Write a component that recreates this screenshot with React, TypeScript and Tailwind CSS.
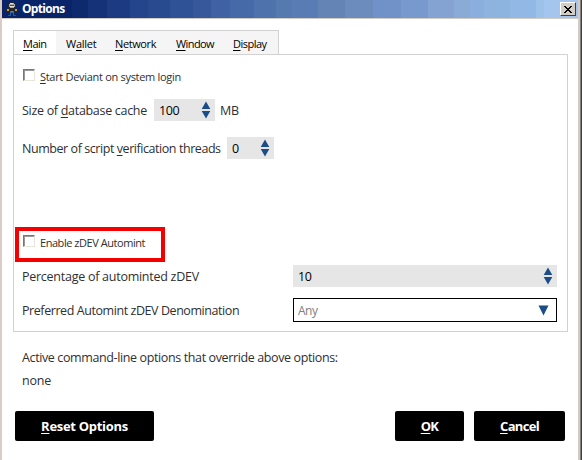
import type { ReactNode } from "react";

const titleBands = [
  { color: "#0a246a", width: 70 },
  { color: "#0e2a6e", width: 16 },
  { color: "#153278", width: 19 },
  { color: "#1c3a82", width: 23 },
  { color: "#24448c", width: 18 },
  { color: "#284a8e", width: 22 },
  { color: "#2f5296", width: 23 },
  { color: "#37599c", width: 18 },
  { color: "#3f62a4", width: 19 },
  { color: "#466aa8", width: 24 },
  { color: "#4e72ac", width: 22 },
  { color: "#557ab0", width: 16 },
  { color: "#5a7cb4", width: 26 },
  { color: "#6584b6", width: 27 },
  { color: "#6b8cbc", width: 28 },
  { color: "#7092c8", width: 28 },
  { color: "#7799ce", width: 27 },
  { color: "#84a3d3", width: 26 },
  { color: "#8aabd6", width: 16 },
  { color: "#8aaede", width: 14 },
  { color: "#8db3df", width: 26 },
  { color: "#92b8e6", width: 26 },
  { color: "#9cc2ea", width: 8 },
  { color: "#a4c6ee", width: 34 },
];

function U({ children }: { children: ReactNode }) {
  return <span className="underline decoration-1 underline-offset-2">{children}</span>;
}

function Robot() {
  return (
    <svg width="12" height="14" viewBox="0 0 12 14" shapeRendering="crispEdges">
      <path fill="#25252b" d="M4 0h4v1h2v6h2v3h-2v1H8v1H4v-1H2v-1H0V7h2V1h2z" />
      <path fill="#aaa9a8" d="M4 1h4v1h1v3H8v1H4V5H3V2h1z" />
      <path fill="#e4e1dc" d="M4 1h3v1H4zM4 4h4v1H4z" />
      <path fill="#514b49" d="M4 3h4v1H4z" />
      <path fill="#d69a27" d="M1 7h2v2H1zM9 7h2v2H9z" />
      <path fill="#2665a8" d="M4 9h4v4H7v-2H5v2H4z" />
      <path fill="#873927" d="M2 13h3v1H2zM7 13h3v1H7z" />
      <path fill="#4994cc" d="M5 9h2v1H5z" />
    </svg>
  );
}

function Checkbox() {
  return (
    <span className="h-3 w-3 shrink-0 border border-t-[#777] border-l-[#777] border-r-[#e8e5dc] border-b-[#e8e5dc] bg-white">
      <span className="block h-full w-full border-t border-l border-[#999]" />
    </span>
  );
}

function Arrows() {
  return (
    <svg width="10" height="18" viewBox="0 0 10 18">
      <path fill="#1b4d89" d="M5 0.5 9.3 8H.7zM.7 10h8.6L5 17.5z" />
    </svg>
  );
}

function Spin({ value, className }: { value: string; className: string }) {
  return (
    <div className={`flex h-[22px] items-center justify-between bg-[#e6e6e6] pr-1 pl-[5px] text-[12.5px] tracking-[-0.4px] text-black ${className}`}>
      <span className="pt-0.5">{value}</span>
      <Arrows />
    </div>
  );
}

export default function App() {
  return (
    <div className="flex h-[460px] w-[582px] overflow-hidden bg-white font-['Open_Sans','Noto_Sans',sans-serif] text-[12.5px] leading-[18px] tracking-[-0.2px] whitespace-nowrap text-[#303030]">
      <div className="w-0.5 bg-[#d8ccc5]" />
      <div className="flex w-[576px] flex-col">
        <header className="relative h-[18px] shrink-0">
          <div className="flex h-full">
            {titleBands.map(({ color, width }) => (
              <span key={color} className="h-full" style={{ backgroundColor: color, width }} />
            ))}
          </div>
          <div className="absolute inset-0 flex items-center justify-between pr-0.5 pl-1">
            <div className="flex items-center gap-1">
              <Robot />
              <span className="text-[12px] font-bold tracking-[-0.7px] text-white">Options</span>
            </div>
            <button className="flex h-3.5 w-4 items-center justify-center border border-t-white border-l-white border-r-[#404040] border-b-[#404040] bg-[#d4cdc5]">
              <svg width="8" height="7" viewBox="0 0 8 7" shapeRendering="crispEdges">
                <path fill="#000" d="M0 0h2v1h1v1h2V1h1V0h2v1H7v1H6v1H5v1h1v1h1v1h1v1H6V6H5V5H3v1H2v1H0V6h1V5h1V4h1V3H2V2H1V1H0z" />
              </svg>
            </button>
          </div>
        </header>
        <div className="h-px shrink-0 bg-[#d4cbc4]" />

        <main className="flex flex-col pt-[11px] pl-[11px]">
          <nav className="flex h-6 w-[266px] border-x border-t border-[#d2d2d2] bg-[#f5f5f5] text-[11px] leading-[25px] tracking-[-0.25px] text-black">
            <span className="w-[42px] bg-white pl-[9px] tracking-[-0.5px]"><U>M</U>ain</span>
            <span className="w-[50px] pl-[10px]">W<U>a</U>llet</span>
            <span className="w-[60px] pl-[9px] tracking-[-0.4px]"><U>N</U>etwork</span>
            <span className="w-[58px] pl-[10px] tracking-[-0.6px]"><U>W</U>indow</span>
            <span className="pl-[9px] tracking-[-0.5px]"><U>D</U>isplay</span>
          </nav>
          <section className="flex h-[278px] w-[555px] flex-col border border-[#d2d2d2] pt-[14px] pl-2">
            <label className="flex h-4 gap-[5px] pl-px text-[11px] leading-4 tracking-[-0.3px]">
              <Checkbox />
              <span><U>S</U>tart Deviant on system login</span>
            </label>
            <div className="mt-[14px] flex h-[22px] items-center">
              <span className="w-[132px] pt-0.5 tracking-[-0.3px]">Size of <U>d</U>atabase cache</span>
              <Spin value="100" className="w-[61px]" />
              <span className="ml-[5px] pt-0.5">MB</span>
            </div>
            <div className="mt-4 flex h-[22px] items-center">
              <span className="w-[205px] pt-0.5 tracking-[-0.44px]">Number of script <U>v</U>erification threads</span>
              <Spin value="0" className="w-[47px]" />
            </div>
            <label className="mt-[68px] -ml-[7px] flex h-[35px] w-[150px] gap-[5px] border-4 border-[#f40000] pt-1 pl-1 text-[11px] leading-4 tracking-[-0.45px]">
              <Checkbox />
              <span>Enable zDEV Automint</span>
            </label>
            <div className="mt-[3px] flex h-[22px] items-center">
              <span className="w-[271px] pt-0.5 tracking-[-0.26px]">Percentage of autominted zDEV</span>
              <Spin value="10" className="w-[264px]" />
            </div>
            <div className="mt-[11px] flex h-6 items-center">
              <span className="w-[271px] pt-0.5 tracking-[-0.43px]">Preferred Automint zDEV Denomination</span>
              <div className="flex h-6 w-[264px] items-center justify-between border border-black pr-[7px] pl-1 text-[12px] tracking-[-0.5px] text-[#808080]">
                <span className="pt-0.5">Any</span>
                <svg width="11" height="11" viewBox="0 0 11 11"><path fill="#1b4d89" d="M.5.5h10l-5 10z" /></svg>
              </div>
            </div>
          </section>
          <div className="mt-[17px] flex flex-col gap-[5px] pl-[9px]">
            <span className="tracking-[-0.38px]">Active command-line options that override above options:</span>
            <span>none</span>
          </div>
          <footer className="mt-[21px] flex pl-0.5 text-[13px] font-bold tracking-[-0.3px] text-white">
            <button className="h-[30px] w-[139px] rounded-xs bg-black"><U>R</U>eset Options</button>
            <button className="ml-[241px] h-[30px] w-[69px] rounded-xs bg-black tracking-[-0.7px]"><U>O</U>K</button>
            <button className="ml-[10px] h-[30px] w-[91px] rounded-xs bg-black tracking-[-0.7px]"><U>C</U>ancel</button>
          </footer>
        </main>
      </div>
      <div className="w-0.5 bg-[#d4cbc4]" />
      <div className="w-px bg-[#808080]" />
      <div className="w-px bg-[#404040]" />
    </div>
  );
}
